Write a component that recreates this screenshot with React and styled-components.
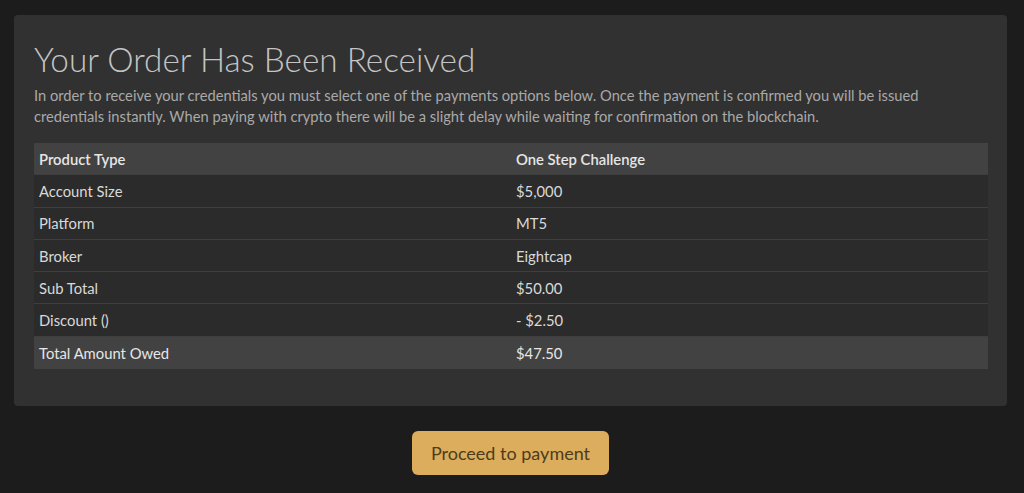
import React from "react";
import styled, { createGlobalStyle } from "styled-components";

const Global = createGlobalStyle`
  html, body { margin: 0; padding: 0; background: #1c1c1d; }
  body { font-family: "Lato", "Noto Sans", sans-serif; }
  * { box-sizing: border-box; }
`;

const Page = styled.div`
  padding: 15px 17px 0 14px;
  display: flex;
  flex-direction: column;
  align-items: center;
`;

const Card = styled.div`
  width: 100%;
  background: #313131;
  border-radius: 4px;
  padding: 24px 19px 37px 20px;
`;

const Title = styled.h1`
  margin: 0 0 6px;
  font-size: 33.3px;
  font-weight: 300;
  color: #c4c4c4;
  line-height: 40px;
`;

const Text = styled.p`
  margin: 0 0 16px;
  font-size: 14.7px;
  line-height: 21px;
  color: #a9a9a9;
`;

const Table = styled.div`
  display: flex;
  flex-direction: column;
`;

const Row = styled.div`
  display: grid;
  grid-template-columns: 1fr 1fr;
  height: 32.3px;
  align-items: center;
  background: ${p => (p.$shade ? "#434242" : "#2b2b2b")};
  border-bottom: ${p => (p.$last ? "none" : "1px solid #3e3e3e")};
  font-size: 14.8px;
  color: ${p => (p.$shade ? "#e6e6e6" : "#d9d9d9")};
  font-weight: ${p => (p.$bold ? 600 : 400)};
`;

const Cell = styled.div`
  padding: 0 5px;
`;

const Button = styled.button`
  margin-top: 25px;
  width: 197px;
  height: 44px;
  border: none;
  border-radius: 6px;
  background: #dbad5d;
  color: #4d3c1c;
  font-family: inherit;
  font-size: 18px;
  cursor: pointer;
`;

const rows = [
  ["Product Type", "One Step Challenge", "head"],
  ["Account Size", "$5,000"],
  ["Platform", "MT5"],
  ["Broker", "Eightcap"],
  ["Sub Total", "$50.00"],
  ["Discount ()", "- $2.50"],
  ["Total Amount Owed", "$47.50", "total"],
];

export default function App() {
  return (
    <>
      <Global />
      <Page>
        <Card>
          <Title>Your Order Has Been Received</Title>
          <Text>
            In order to receive your credentials you must select one of the payments options below. Once the payment is confirmed you will be issued credentials instantly. When paying with crypto there will be a slight delay while waiting for confirmation on the blockchain.
          </Text>
          <Table>
            {rows.map(([k, v, t], i) => (
              <Row key={k} $shade={!!t} $bold={t === "head"} $last={i === rows.length - 1}>
                <Cell>{k}</Cell>
                <Cell>{v}</Cell>
              </Row>
            ))}
          </Table>
        </Card>
        <Button>Proceed to payment</Button>
      </Page>
    </>
  );
}
